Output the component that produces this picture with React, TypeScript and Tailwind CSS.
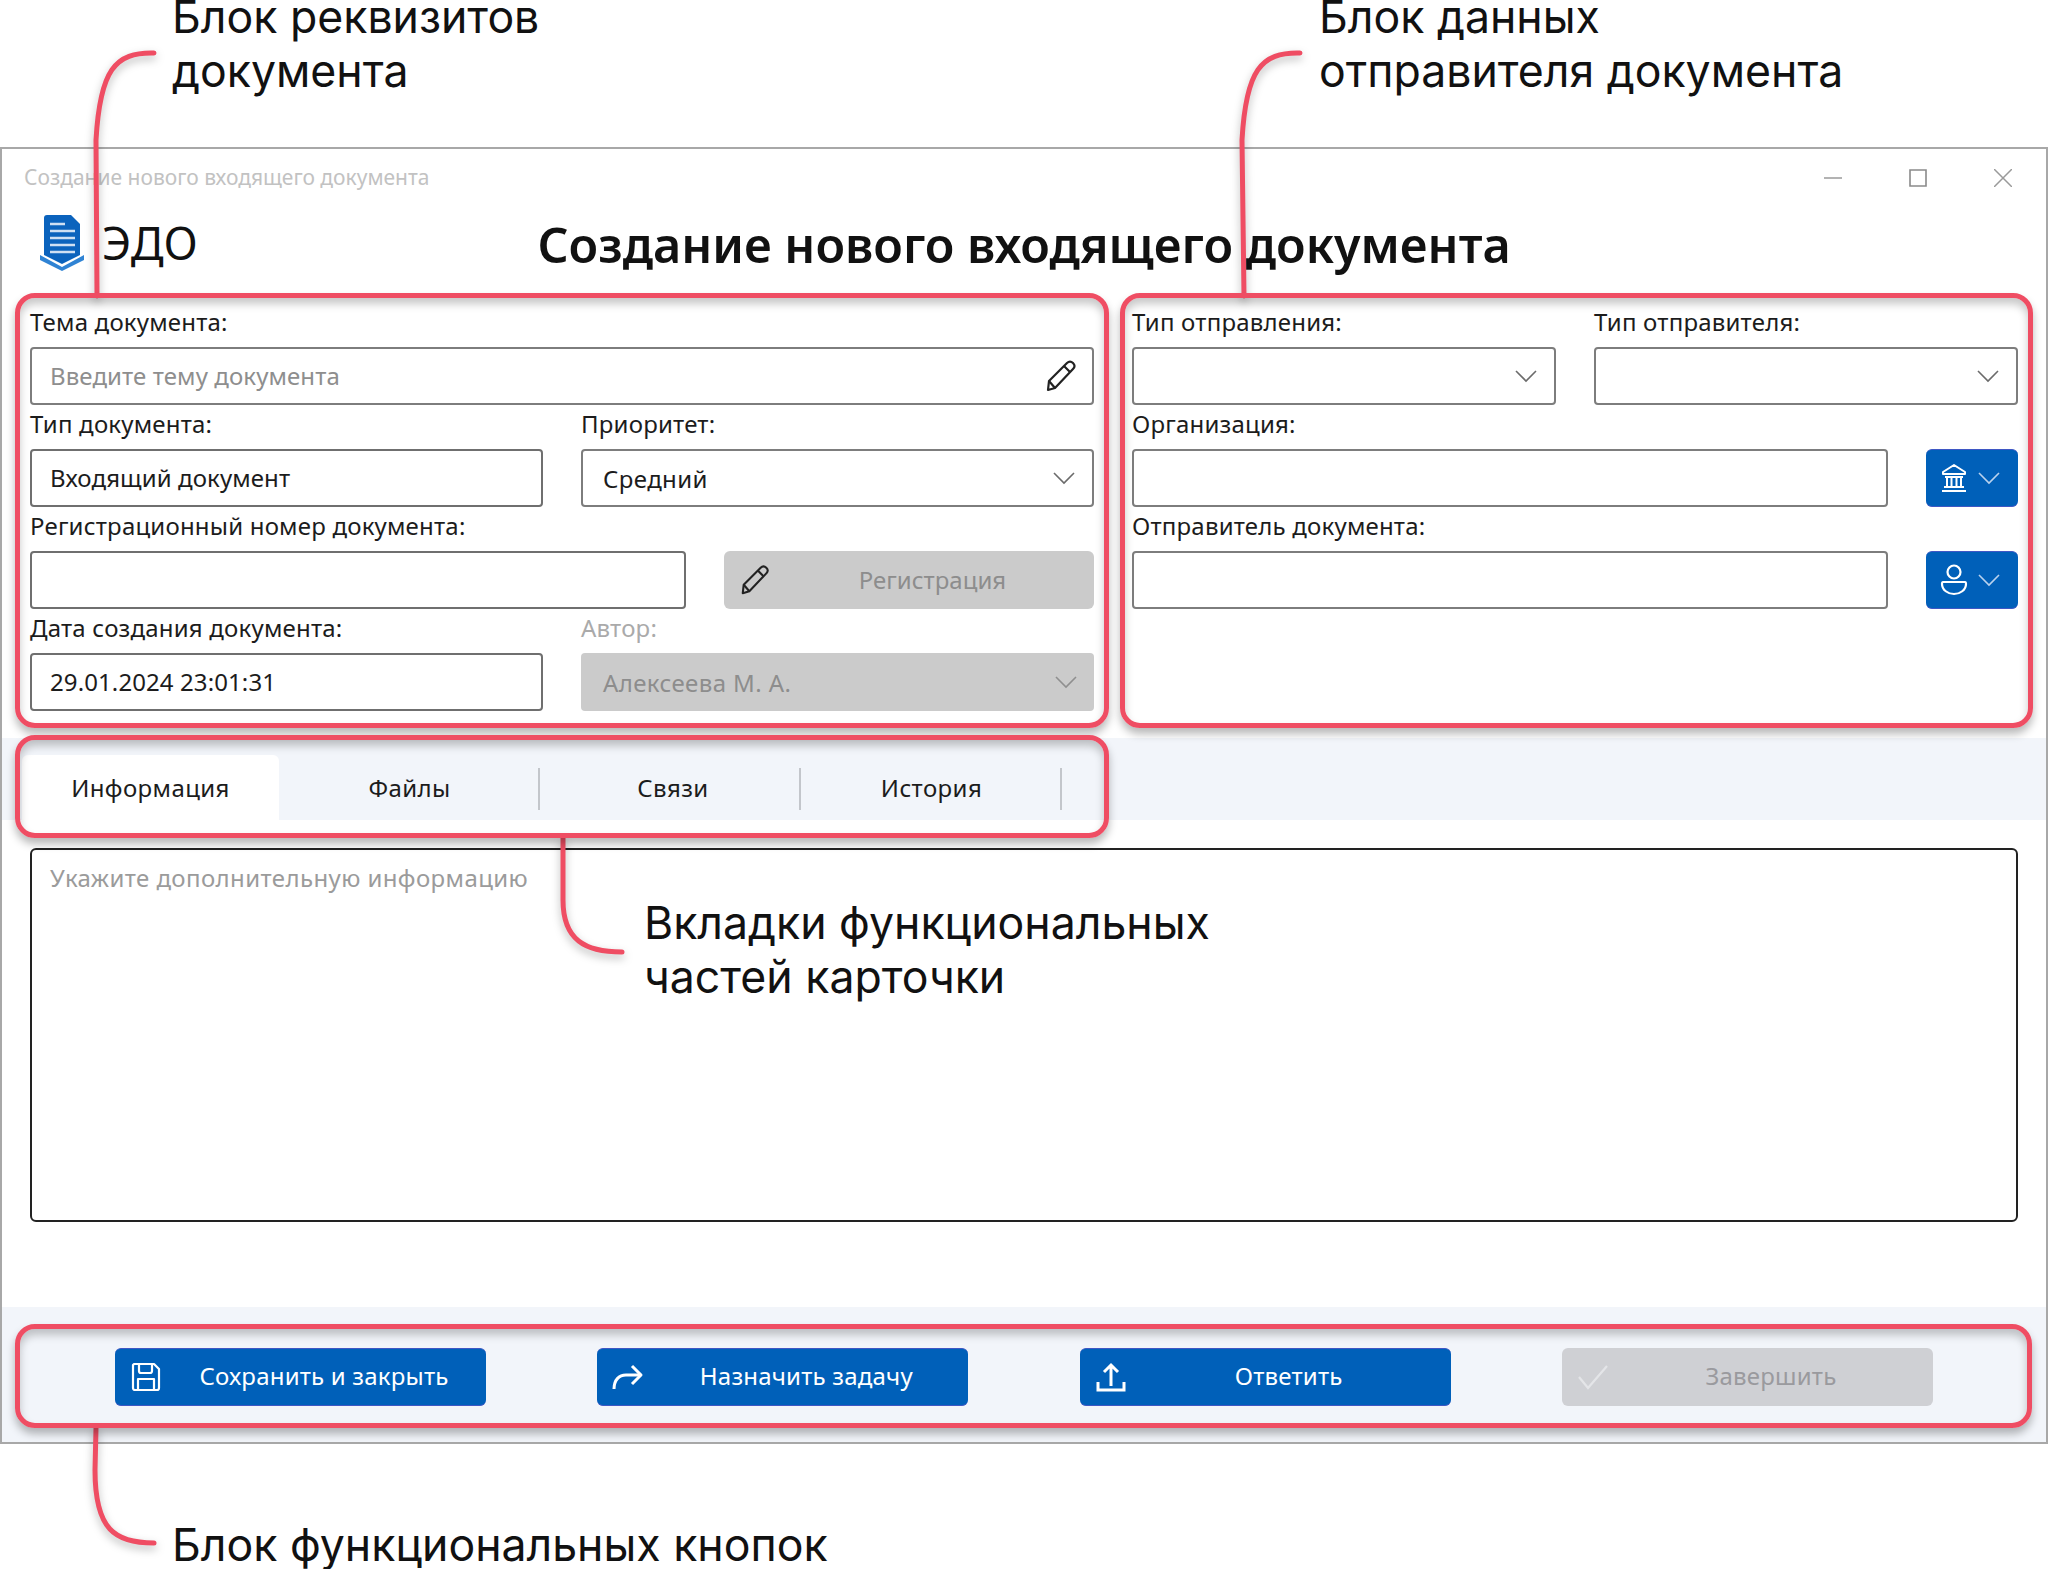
import React from "react";

const ui = "font-['Noto_Sans',sans-serif]";
const note = "font-['Inter',sans-serif] text-[44.6px] leading-[53.5px] text-[#111]";

function Chevron({ className = "stroke-[#6b6b6b]" }: { className?: string }) {
  return (
    <svg width="24" height="14" viewBox="0 0 24 14" fill="none" className={className} strokeWidth="1.6">
      <path d="M2 2l10 10L22 2" />
    </svg>
  );
}

function Pencil({ color = "#222" }: { color?: string }) {
  return (
    <svg width="34" height="34" viewBox="0 0 34 34" fill="none" stroke={color} strokeWidth="2.2" strokeLinejoin="round">
      <path d="M4 31l1-9L23 4c2-2 4-2 6 0s2 4 0 6L11 29z" />
      <path d="M20 7l6 6M5 22l6 7" />
    </svg>
  );
}

function Label({ children, muted }: { children: React.ReactNode; muted?: boolean }) {
  return <div className={`h-[44px] pt-[1px] text-[24px] tracking-[0.2px] leading-[36px] ${muted ? "text-[#aaa]" : "text-[#1c1c1c]"}`}>{children}</div>;
}

function Box({ children, className = "", dark }: { children?: React.ReactNode; className?: string; dark?: boolean }) {
  return (
    <div className={`h-[58px] rounded-[4px] border-2 ${dark ? "border-[#6f6f6f]" : "border-[#7d7d7d]"} bg-white flex items-center pl-[18px] pr-[14px] text-[24px] tracking-[0.1px] ${className}`}>
      {children}
    </div>
  );
}

function Select({ value, disabled }: { value?: string; disabled?: boolean }) {
  return (
    <div className={`h-[58px] rounded-[4px] flex items-center justify-between pr-[16px] text-[24px] tracking-[0.4px] ${disabled ? "pl-[22px] bg-[#cbcbcb] text-[#8d8d8d]" : "pl-[20px] bg-white border-2 border-[#7d7d7d] text-[#1c1c1c]"}`}>
      <span className="pt-[2px]">{value}</span>
      <Chevron className={disabled ? "stroke-[#8f8f8f]" : "stroke-[#6b6b6b]"} />
    </div>
  );
}

function IconMenu({ children }: { children: React.ReactNode }) {
  return (
    <div className="w-[92px] h-[58px] rounded-[6px] bg-[#0060b9] border-y border-[#3f57c4] flex items-center pl-[14px] gap-[9px]">
      {children}
      <Chevron className="stroke-[#b9d2ee]" />
    </div>
  );
}

function ActionButton({ icon, label, disabled }: { icon: React.ReactNode; label: string; disabled?: boolean }) {
  return (
    <div className={`w-[371px] h-[58px] rounded-[6px] flex items-center pl-[15px] text-[24px] tracking-[0.2px] ${disabled ? "bg-[#cfd0d4] text-[#9a9a9e]" : "bg-[#0060b9] border-y border-[#3f57c4] text-white"}`}>
      <span className="w-[32px] flex justify-center">{icon}</span>
      <span className="flex-1 text-center pb-[2px]">{label}</span>
    </div>
  );
}

function Tab({ label, active, shift }: { label: string; active?: boolean; shift?: boolean }) {
  return (
    <div className={`relative h-[65px] flex items-center justify-center text-[24px] tracking-[0.4px] text-[#1c1c1c] ${active ? "w-[257px] bg-white rounded-t-[6px]" : "w-[261px]"} ${shift ? "pl-[5px]" : ""}`}>
      <span>{label}</span>
      {!active && <span className="absolute right-0 top-[13px] h-[42px] w-[2px] bg-[#c3c6cb]" />}
    </div>
  );
}

const frame = "absolute rounded-[20px] border-[5px] border-[#ef4d63] shadow-[0_6px_9px_rgba(0,0,0,0.28),inset_0_6px_9px_rgba(0,0,0,0.22)]";

export default function App() {
  return (
    <div className="relative w-[2048px] h-[1569px] overflow-hidden bg-white">
      <div className={`h-[147px] grid grid-cols-[1319px_1fr] ${note}`}>
        <div className="pl-[172px] -mt-[9px]">Блок реквизитов<br />документа</div>
        <div className="-mt-[9px]">Блок данных<br />отправителя документа</div>
      </div>

      <div className={`h-[1297px] border-2 border-[#a8a8a8] flex flex-col ${ui}`}>
        <div className="h-[58px] flex items-center justify-between pl-[22px] text-[#c2c2c2] text-[21px]">
          <span>Создание нового входящего документа</span>
          <div className="flex items-center gap-[67px] pr-[34px]">
            <svg width="18" height="18" viewBox="0 0 18 18" stroke="#9a9a9a" strokeWidth="1.5" fill="none"><path d="M0 9h18" /></svg>
            <svg width="18" height="18" viewBox="0 0 18 18" stroke="#8a8a8a" strokeWidth="1.6" fill="none"><path d="M1 1h16v16H1z" /></svg>
            <svg width="18" height="18" viewBox="0 0 18 18" stroke="#9a9a9a" strokeWidth="1.5" fill="none"><path d="M0 0l18 18M18 0L0 18" /></svg>
          </div>
        </div>

        <div className="h-[96px] grid grid-cols-[1fr_auto_1fr] items-center pl-[36px] pr-[36px] pb-[22px]">
          <div className="flex items-center gap-[16px] -mt-[4px]">
            <svg width="48" height="58" viewBox="0 0 48 58">
              <path d="M6 5a3 3 0 0 1 3-3h24l9 9v31l-18 9-18-9z" fill="#0b63bd" />
              <path d="M2 42l22 12 22-12v5L24 58 2 47z" fill="#2f83d4" />
              <path d="M12 11h15M12 18h25M12 25h25M12 32h25M12 39h25" stroke="#cfe0f3" strokeWidth="2.5" />
            </svg>
            <span className="text-[45px] leading-none text-[#111]">ЭДО</span>
          </div>
          <h1 className="text-[48.5px] leading-none font-semibold text-[#111]">Создание нового входящего документа</h1>
          <div />
        </div>

        <div className="grid grid-cols-[1064px_886px] gap-x-[38px] pl-[28px] h-[408px]">
          <div className="flex flex-col text-[#1c1c1c]">
            <Label>Тема документа:</Label>
            <Box className="justify-between text-[#8e8e8e]">
              <span>Введите тему документа</span>
              <Pencil />
            </Box>
            <div className="grid grid-cols-2 gap-x-[38px] w-[1064px]">
              <div>
                <Label>Тип документа:</Label>
                <Box dark>Входящий документ</Box>
              </div>
              <div>
                <Label>Приоритет:</Label>
                <Select value="Средний" />
              </div>
            </div>
            <Label>Регистрационный номер документа:</Label>
            <div className="grid grid-cols-[656px_370px] gap-x-[38px]">
              <Box dark />
              <div className="h-[58px] rounded-[6px] bg-[#cbcbcb] text-[#8d8d8d] flex items-center pl-[15px] text-[24px]">
                <span className="w-[32px] flex justify-center"><Pencil /></span>
                <span className="flex-1 text-center">Регистрация</span>
              </div>
            </div>
            <div className="grid grid-cols-2 gap-x-[38px]">
              <div>
                <Label>Дата создания документа:</Label>
                <Box dark>29.01.2024 23:01:31</Box>
              </div>
              <div>
                <Label muted>Автор:</Label>
                <Select value="Алексеева М. А." disabled />
              </div>
            </div>
          </div>

          <div className="flex flex-col">
            <div className="grid grid-cols-2 gap-x-[38px]">
              <div>
                <Label>Тип отправления:</Label>
                <Select />
              </div>
              <div>
                <Label>Тип отправителя:</Label>
                <Select />
              </div>
            </div>
            <Label>Организация:</Label>
            <div className="grid grid-cols-[756px_92px] gap-x-[38px]">
              <Box />
              <IconMenu>
                <svg width="28" height="30" viewBox="0 0 28 30" fill="none" stroke="#fff" strokeWidth="2">
                  <path d="M14 2L3 9v2h22V9z" strokeLinejoin="round" />
                  <path d="M5 14h18M7 14v9M11.5 14v9M16.5 14v9M21 14v9M4 24h20M2 28h24" />
                </svg>
              </IconMenu>
            </div>
            <Label>Отправитель документа:</Label>
            <div className="grid grid-cols-[756px_92px] gap-x-[38px]">
              <Box />
              <IconMenu>
                <svg width="28" height="34" viewBox="0 0 28 34" fill="none" stroke="#fff" strokeWidth="2.2">
                  <circle cx="14" cy="9" r="6.5" />
                  <path d="M3 19h22c1 0 1 1 1 2 0 6-6 10-12 10S2 27 2 21c0-1 0-2 1-2z" />
                </svg>
              </IconMenu>
            </div>
          </div>
        </div>

        <div className="mt-[27px] h-[82px] pt-[17px] pl-[20px] bg-[#f2f5fa] flex items-start">
          <Tab label="Информация" active />
          <Tab label="Файлы" />
          <Tab label="Связи" shift />
          <Tab label="История" />
        </div>

        <div className="flex-1 px-[28px] pt-[28px] pb-[85px]">
          <div className="h-full rounded-[6px] border-2 border-[#222] pl-[18px] pt-[10px] text-[24px] leading-[36px] tracking-[0.4px] text-[#9b9b9b]">
            Укажите дополнительную информацию
          </div>
        </div>

        <div className="h-[135px] bg-[#f2f5fa] flex justify-between px-[113px] pt-[41px]">
          <ActionButton
            label="Сохранить и закрыть"
            icon={
              <svg width="30" height="30" viewBox="0 0 30 30" fill="none" stroke="#fff" strokeWidth="2.2" strokeLinejoin="round">
                <path d="M3 2h20l5 5v19a2 2 0 0 1-2 2H4a2 2 0 0 1-2-2V3z" />
                <path d="M8 2v7a2 2 0 0 0 2 2h9a2 2 0 0 0 2-2V2M7 28V17h16v11" />
              </svg>
            }
          />
          <ActionButton
            label="Назначить задачу"
            icon={
              <svg width="32" height="26" viewBox="0 0 32 26" fill="none" stroke="#fff" strokeWidth="3" strokeLinejoin="round">
                <path d="M2 25c0-9 5-14 12-14h14" />
                <path d="M20 2l9 9-9 9" />
              </svg>
            }
          />
          <ActionButton
            label="Ответить"
            icon={
              <svg width="30" height="30" viewBox="0 0 30 30" fill="none" stroke="#fff" strokeWidth="3">
                <path d="M15 24V3M8 10l7-7 7 7" />
                <path d="M2 20v8h26v-8" />
              </svg>
            }
          />
          <ActionButton
            disabled
            label="Завершить"
            icon={
              <svg width="32" height="26" viewBox="0 0 32 26" fill="none" stroke="#e4e5e8" strokeWidth="2.2">
                <path d="M2 13l9 11L30 2" />
              </svg>
            }
          />
        </div>
      </div>

      <div className={`h-[125px] pl-[172px] pt-[75px] ${note}`}>Блок функциональных кнопок</div>

      <svg
        width="2048"
        height="1569"
        viewBox="0 0 2048 1569"
        fill="none"
        stroke="#ef4d63"
        strokeWidth="5"
        strokeLinecap="round"
        className="absolute inset-0 drop-shadow-[0_4px_4px_rgba(0,0,0,0.28)]"
      >
        <path d="M154 53C115 52 100 70 96 140L97 296" />
        <path d="M1300 53C1261 52 1246 70 1242 140L1244 296" />
        <path d="M563 838V900C563 940 585 952 622 952" />
        <path d="M96 1428L95 1470C95 1530 115 1543 154 1543" />
      </svg>

      <div className={`${frame} left-[15px] top-[293px] w-[1094px] h-[435px]`} />
      <div className={`${frame} left-[1120px] top-[293px] w-[913px] h-[435px]`} />
      <div className={`${frame} left-[15px] top-[735px] w-[1094px] h-[103px]`} />
      <div className={`${frame} left-[15px] top-[1324px] w-[2017px] h-[104px]`} />

      <div className={`absolute left-[644px] top-[897px] ${note}`}>
        Вкладки функциональных<br />частей карточки
      </div>
    </div>
  );
}
